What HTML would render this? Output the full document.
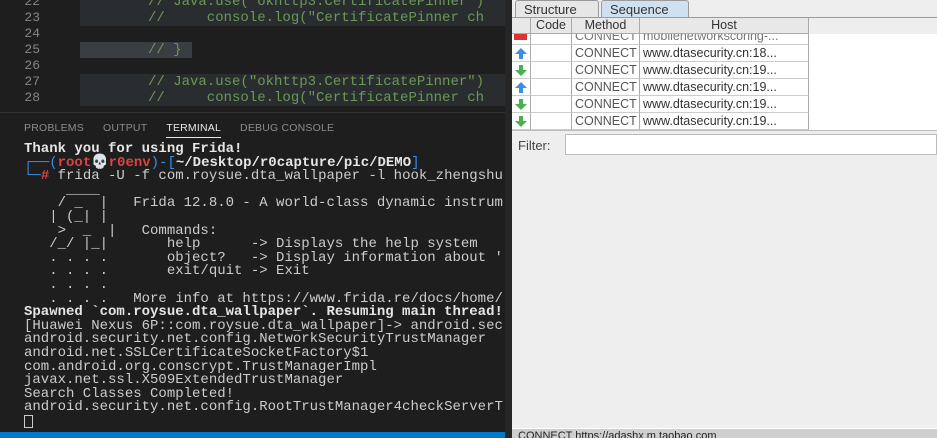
<!DOCTYPE html>
<html><head><style>
*{margin:0;padding:0;box-sizing:border-box}
body{width:937px;height:438px;overflow:hidden;background:#1e1e1e;position:relative;font-family:"Liberation Mono",monospace}
.ed{position:absolute;left:0;top:0;width:505px;height:112px;background:#1e1e1e;overflow:hidden}
.ln{position:absolute;left:0;width:68px;text-align:right;padding-right:28px;color:#858585;font-size:13px}
.cl{position:absolute;left:80px;height:16px;background:#2f3033}
.ct{position:absolute;left:80px;font-size:14px;color:#6a9955;white-space:pre}
.panel{position:absolute;left:0;top:112px;width:505px;height:320px;background:#1e1e1e;border-top:1px solid #333}
.tabs{position:absolute;top:9px;left:24px;font-family:"Liberation Sans",sans-serif;font-size:10.5px;color:#8b8b8b;letter-spacing:.2px}
.tabs span{margin-right:19px}
.term{position:absolute;left:24px;top:30px;font-size:14px;line-height:13.6px;color:#cccccc;white-space:pre}
.b{font-weight:bold;color:#e5e5e5}
.r{color:#e04040;font-weight:bold}
.bl{color:#3b8eea}
.sb{position:absolute;left:0;top:432px;width:505px;height:6px;background:#007acc}
.div{position:absolute;left:505px;top:0;width:8px;height:438px;background:#262626}
.rp{position:absolute;left:512px;top:0;width:425px;height:438px;background:#eeeeee;font-family:"Liberation Sans",sans-serif;font-size:13px;color:#333}
.tab{position:absolute;top:0;height:17px;border:1px solid #999;border-bottom:none;padding:1px 8px;font-size:13px;line-height:15px;border-radius:3px 3px 0 0}
.c{position:absolute;border-right:1px solid #aaa;border-bottom:1px solid #ccc;height:17px;font-size:12.5px;line-height:16px;white-space:nowrap;overflow:hidden;padding:0 3px;color:#555;background:#fff}
.h{background:#e8e8e8;color:#333;text-align:center;border-bottom:1px solid #aaa;height:16px;line-height:15px;top:18px}
.st{position:absolute;left:512px;top:428px;width:425px;height:10px;background:#cfcfcf;border-top:1px solid #fff;font-family:"Liberation Sans",sans-serif;font-size:11px;line-height:14px;padding-left:6px;color:#222;overflow:hidden}
</style></head><body>
<div class="ed">
<div class="cl" style="top:-6px;width:425px;height:32px;background:#2a2d30"></div>
<div class="cl" style="top:26px;width:425px;background:#1e1e1e"></div>
<div class="cl" style="top:42px;width:112px;background:#3a3d41"></div>
<div class="cl" style="top:74px;width:425px;height:32px;background:#2a2d30"></div>
<div class="ln" style="top:-6px">22</div><div class="ln" style="top:10px">23</div><div class="ln" style="top:26px">24</div><div class="ln" style="top:42px">25</div><div class="ln" style="top:58px">26</div><div class="ln" style="top:74px">27</div><div class="ln" style="top:90px">28</div>
<div class="ct" style="top:-6px;left:148px">// Java.use("okhttp3.CertificatePinner")</div>
<div class="ct" style="top:10px;left:148px">//     console.log("CertificatePinner ch</div>
<div class="ct" style="top:42px;left:148px">// }</div>
<div class="ct" style="top:74px;left:148px">// Java.use("okhttp3.CertificatePinner")</div>
<div class="ct" style="top:90px;left:148px">//     console.log("CertificatePinner ch</div>
</div>
<div class="panel">
<div class="tabs"><span>PROBLEMS</span><span>OUTPUT</span><span style="color:#e7e7e7;border-bottom:1px solid #e7e7e7;padding-bottom:3px">TERMINAL</span><span>DEBUG CONSOLE</span></div>
<div class="term"><span class="b">Thank you for using Frida!</span>
<span class="bl">┌──(</span><span class="r">root💀r0env</span><span class="bl">)-[</span><span class="b">~/Desktop/r0capture/pic/DEMO</span><span class="bl">]</span>
<span class="bl">└─</span><span class="r">#</span> frida -U -f com.roysue.dta_wallpaper -l hook_zhengshu
     ____
    / _  |   Frida 12.8.0 - A world-class dynamic instrum
   | (_| |
    &gt;  _  |   Commands:
   /_/ |_|       help      -&gt; Displays the help system
   . . . .       object?   -&gt; Display information about '
   . . . .       exit/quit -&gt; Exit
   . . . .
   . . . .   More info at https://www.frida.re/docs/home/
<span class="b">Spawned `com.roysue.dta_wallpaper`. Resuming main thread!</span>
[Huawei Nexus 6P::com.roysue.dta_wallpaper]-&gt; android.sec
android.security.net.config.NetworkSecurityTrustManager
android.net.SSLCertificateSocketFactory$1
com.android.org.conscrypt.TrustManagerImpl
javax.net.ssl.X509ExtendedTrustManager
Search Classes Completed!
android.security.net.config.RootTrustManager4checkServerT
<span style="display:inline-block;width:9px;height:13px;border:1px solid #ccc;vertical-align:-2px"></span></div>
</div>
<div class="sb"></div>
<div class="div"></div>
<div class="rp">
<div class="tab" style="left:3px;width:84px;background:#e6e6e6">Structure</div>
<div class="tab" style="left:89px;width:88px;background:#cfe0f0">Sequence</div>
<div style="position:absolute;left:0;top:17px;width:425px;height:1px;background:#999"></div>
<div style="position:absolute;left:0;top:34px;width:297px;height:96px;background:#fff"></div>
<div class="c h" style="left:0;width:19px"></div>
<div class="c h" style="left:19px;width:41px">Code</div>
<div class="c h" style="left:60px;width:68px">Method</div>
<div class="c h" style="left:128px;width:169px">Host</div>
<div id="rows"></div>
<div class="c" style="left:0;top:34px;width:19px;height:11px;padding:0"><div style="margin:0 2px;width:13px;height:6px;background:#d33"></div></div>
<div class="c" style="left:19px;top:34px;width:41px;height:11px"></div>
<div class="c" style="left:60px;top:34px;width:68px;height:11px;line-height:4px;color:#777">CONNECT</div>
<div class="c" style="left:128px;top:34px;width:169px;height:11px;line-height:4px;color:#777">mobilenetworkscoring-...</div>
<!-- rows -->
<div class="c" style="left:0;top:45px;width:19px;padding:0"><svg width="18" height="16"><path d="M9 3 L15 9 H11 V14 H7 V9 H3 Z" fill="#3a8ee6"/></svg></div>
<div class="c" style="left:19px;top:45px;width:41px"></div><div class="c" style="left:60px;top:45px;width:68px">CONNECT</div><div class="c" style="left:128px;top:45px;width:169px;color:#333">www.dtasecurity.cn:18...</div>
<div class="c" style="left:0;top:62px;width:19px;padding:0"><svg width="18" height="16"><path d="M9 14 L15 8 H11 V3 H7 V8 H3 Z" fill="#4caf50"/></svg></div>
<div class="c" style="left:19px;top:62px;width:41px"></div><div class="c" style="left:60px;top:62px;width:68px">CONNECT</div><div class="c" style="left:128px;top:62px;width:169px;color:#333">www.dtasecurity.cn:19...</div>
<div class="c" style="left:0;top:79px;width:19px;padding:0"><svg width="18" height="16"><path d="M9 3 L15 9 H11 V14 H7 V9 H3 Z" fill="#3a8ee6"/></svg></div>
<div class="c" style="left:19px;top:79px;width:41px"></div><div class="c" style="left:60px;top:79px;width:68px">CONNECT</div><div class="c" style="left:128px;top:79px;width:169px;color:#333">www.dtasecurity.cn:19...</div>
<div class="c" style="left:0;top:96px;width:19px;padding:0"><svg width="18" height="16"><path d="M9 14 L15 8 H11 V3 H7 V8 H3 Z" fill="#4caf50"/></svg></div>
<div class="c" style="left:19px;top:96px;width:41px"></div><div class="c" style="left:60px;top:96px;width:68px">CONNECT</div><div class="c" style="left:128px;top:96px;width:169px;color:#333">www.dtasecurity.cn:19...</div>
<div class="c" style="left:0;top:113px;width:19px;padding:0"><svg width="18" height="16"><path d="M9 14 L15 8 H11 V3 H7 V8 H3 Z" fill="#4caf50"/></svg></div>
<div class="c" style="left:19px;top:113px;width:41px"></div><div class="c" style="left:60px;top:113px;width:68px">CONNECT</div><div class="c" style="left:128px;top:113px;width:169px;color:#333">www.dtasecurity.cn:19...</div>
<div style="position:absolute;left:297px;top:34px;width:128px;height:96px;background:#fff"></div>
<div style="position:absolute;left:0;top:130px;width:425px;height:1px;background:#bbb"></div>
<div style="position:absolute;left:6px;top:138px;font-size:13px;color:#444">Filter:</div>
<div style="position:absolute;left:53px;top:134px;width:372px;height:21px;background:#fff;border:1px solid #bbb"></div>
</div>
<div class="st">CONNECT https://adashx.m.taobao.com</div>
</body></html>
